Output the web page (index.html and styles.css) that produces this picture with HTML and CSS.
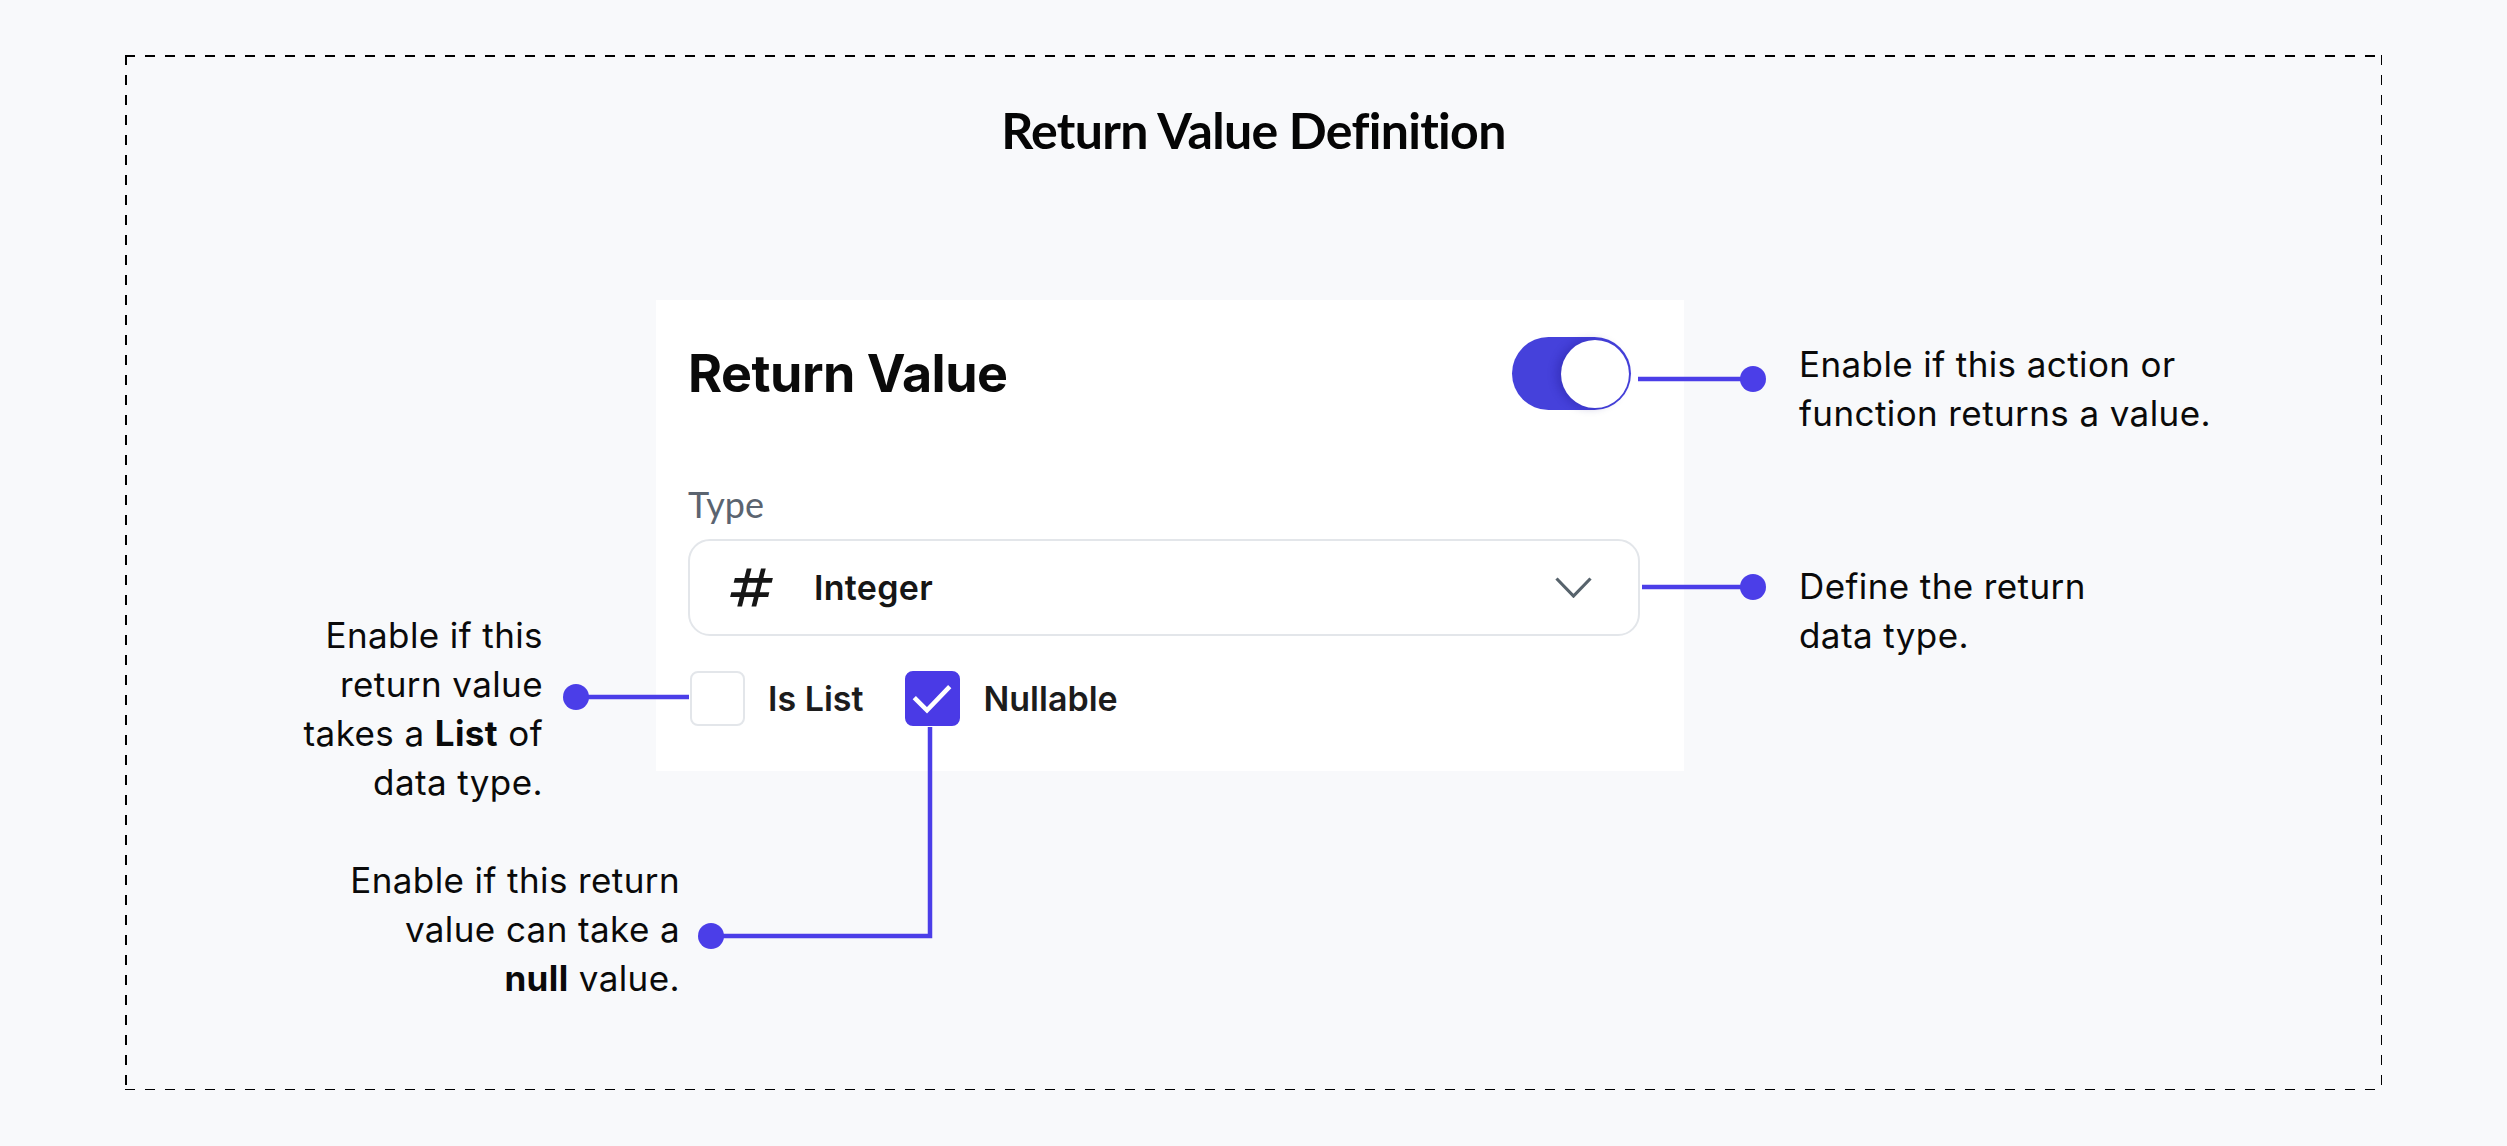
FILE: index.html
```html
<!DOCTYPE html>
<html lang="en">
<head>
<meta charset="utf-8">
<title>Return Value Definition</title>
<link rel="stylesheet" href="styles.css">
</head>
<body>
<div class="frame">
  <h1 class="title">Return Value Definition</h1>

  <div class="card">
    <div class="card-head">
      <h2 class="card-title">Return Value</h2>
      <div class="toggle"><span class="knob"></span></div>
    </div>
    <div class="field-label">Type</div>
    <div class="select">
      <svg class="hash" viewBox="0 0 24 24" aria-hidden="true"><path d="M20.5 10l.5-2h-4l1-4h-2l-1 4h-4l1-4h-2L9 8H5l-.5 2h4l-1 4h-4L3 16h4l-1 4h2l1-4h4l-1 4h2l1-4h4l.5-2h-4l1-4h4zm-7 4h-4l1-4h4l-1 4z"/></svg>
      <span class="select-value">Integer</span>
      <svg class="chevron" viewBox="0 0 37 21" aria-hidden="true"><polyline points="1.5,1.5 18.5,19 35.5,1.5"/></svg>
    </div>
    <div class="checks">
      <div class="check"><span class="box"></span><span class="check-label">Is List</span></div>
      <div class="check"><span class="box box-on"><svg viewBox="0 0 55 55" aria-hidden="true"><polyline points="8,27 22,41 47,15"/></svg></span><span class="check-label">Nullable</span></div>
    </div>
  </div>

  <p class="note note-toggle">Enable if this action or<br>function returns a value.</p>
  <p class="note note-type">Define the return<br>data type.</p>
  <p class="note note-list">Enable if this<br>return value<br>takes a <b>List</b> of<br>data type.</p>
  <p class="note note-null">Enable if this return<br>value can take a<br><b>null</b> value.</p>

  <svg class="wires" viewBox="0 0 2257 1035" aria-hidden="true">
    <line x1="1513" y1="324" x2="1628" y2="324"/>
    <circle cx="1628" cy="324" r="13"/>
    <line x1="1517" y1="532" x2="1628" y2="532"/>
    <circle cx="1628" cy="532" r="13"/>
    <line x1="451" y1="642" x2="564" y2="642"/>
    <circle cx="451" cy="642" r="13"/>
    <polyline points="805,672 805,881 586,881"/>
    <circle cx="586" cy="881" r="13"/>
  </svg>
</div>
</body>
</html>
```

FILE: styles.css
```css
* { box-sizing: border-box; }

html, body {
  margin: 0;
  padding: 0;
}

body {
  width: 2507px;
  height: 1146px;
  background: #f8f9fb;
  font-family: "Lato", "Noto Sans", sans-serif;
  color: #0b0b0b;
  overflow: hidden;
}

.frame {
  position: relative;
  margin: 55px 125px 0;
  height: 1035px;
  padding-top: 45px;
  background:
    linear-gradient(to right, #000 50%, transparent 50%) left top / 20px 1.5px repeat-x,
    linear-gradient(to right, #000 50%, transparent 50%) left bottom / 20px 1.5px repeat-x,
    linear-gradient(to bottom, #000 50%, transparent 50%) left top / 1.5px 20px repeat-y,
    linear-gradient(to bottom, #000 50%, transparent 50%) right top / 1.5px 20px repeat-y;
}

.title {
  margin: 0;
  font-size: 50px;
  line-height: 60px;
  font-weight: 700;
  letter-spacing: -0.7px;
  text-align: center;
  color: #050505;
}

/* ---------- card ---------- */
.card {
  width: 1028px;
  margin: 140px 0 0 531px;
  padding: 37px 44px 45px 32px;
  background: #ffffff;
}

.card-head {
  display: flex;
  align-items: center;
  justify-content: space-between;
  padding-right: 9px;
}

.card-title {
  margin: 0;
  font-family: "Inter", "Lato", sans-serif;
  font-size: 52px;
  line-height: 53px;
  font-weight: 700;
  letter-spacing: -0.5px;
  color: #0a0a0a;
}

.toggle {
  width: 119px;
  height: 73px;
  border-radius: 37px;
  background: #4541db;
  display: flex;
  justify-content: flex-end;
  align-items: center;
  padding: 0 2px;
}

.knob {
  width: 68px;
  height: 68px;
  border-radius: 50%;
  background: #ffffff;
  box-shadow: -5px 0 8px rgba(20, 10, 120, 0.25);
}

.field-label {
  margin-top: 72px;
  font-size: 36px;
  line-height: 44px;
  color: #5b6470;
}

.select {
  margin-top: 13px;
  height: 97px;
  border: 2px solid #e3e6ea;
  border-radius: 22px;
  display: flex;
  align-items: center;
  padding: 0 46px 0 33px;
}

.hash {
  width: 57px;
  height: 57px;
  fill: #161616;
  flex: none;
}

.select-value {
  margin-left: 34px;
  font-family: "Inter", "Lato", sans-serif;
  font-size: 34px;
  font-weight: 600;
  letter-spacing: 0.3px;
  color: #161616;
  flex: 1;
}

.chevron {
  width: 37px;
  height: 21px;
  fill: none;
  stroke: #57636c;
  stroke-width: 3.2;
  flex: none;
}

.checks {
  margin-top: 35px;
  display: flex;
  align-items: center;
  padding-left: 2px;
}

.check {
  display: flex;
  align-items: center;
  margin-right: 42px;
}

.box {
  width: 55px;
  height: 55px;
  border: 2.5px solid #e3e6ea;
  border-radius: 8px;
  background: #ffffff;
  flex: none;
}

.box-on {
  border-color: #4a3ae6;
  background: #4a3ae6;
}

.box-on svg {
  display: block;
  width: 50px;
  height: 50px;
  fill: none;
  stroke: #ffffff;
  stroke-width: 5;
}

.check-label {
  margin-left: 23px;
  font-family: "Inter", "Lato", sans-serif;
  font-size: 34px;
  font-weight: 600;
  color: #1c1c1c;
}

/* ---------- annotations ---------- */
.note {
  position: absolute;
  margin: 0;
  font-family: "Inter", "Lato", sans-serif;
  font-size: 35px;
  line-height: 49px;
  letter-spacing: 0.4px;
  color: #0a0a0a;
  white-space: nowrap;
}

.note b { font-weight: 700; }

.note-toggle { left: 1674px; top: 285px; }
.note-type   { left: 1674px; top: 507px; }
.note-list   { right: 1839px; top: 556px; text-align: right; }
.note-null   { right: 1702px; top: 801px; text-align: right; }

.wires {
  position: absolute;
  left: 0;
  top: 0;
  width: 2257px;
  height: 1035px;
  pointer-events: none;
}

.wires line,
.wires polyline {
  stroke: #4b3ee8;
  stroke-width: 4.5;
  fill: none;
}

.wires circle {
  fill: #4b3ee8;
}
```
